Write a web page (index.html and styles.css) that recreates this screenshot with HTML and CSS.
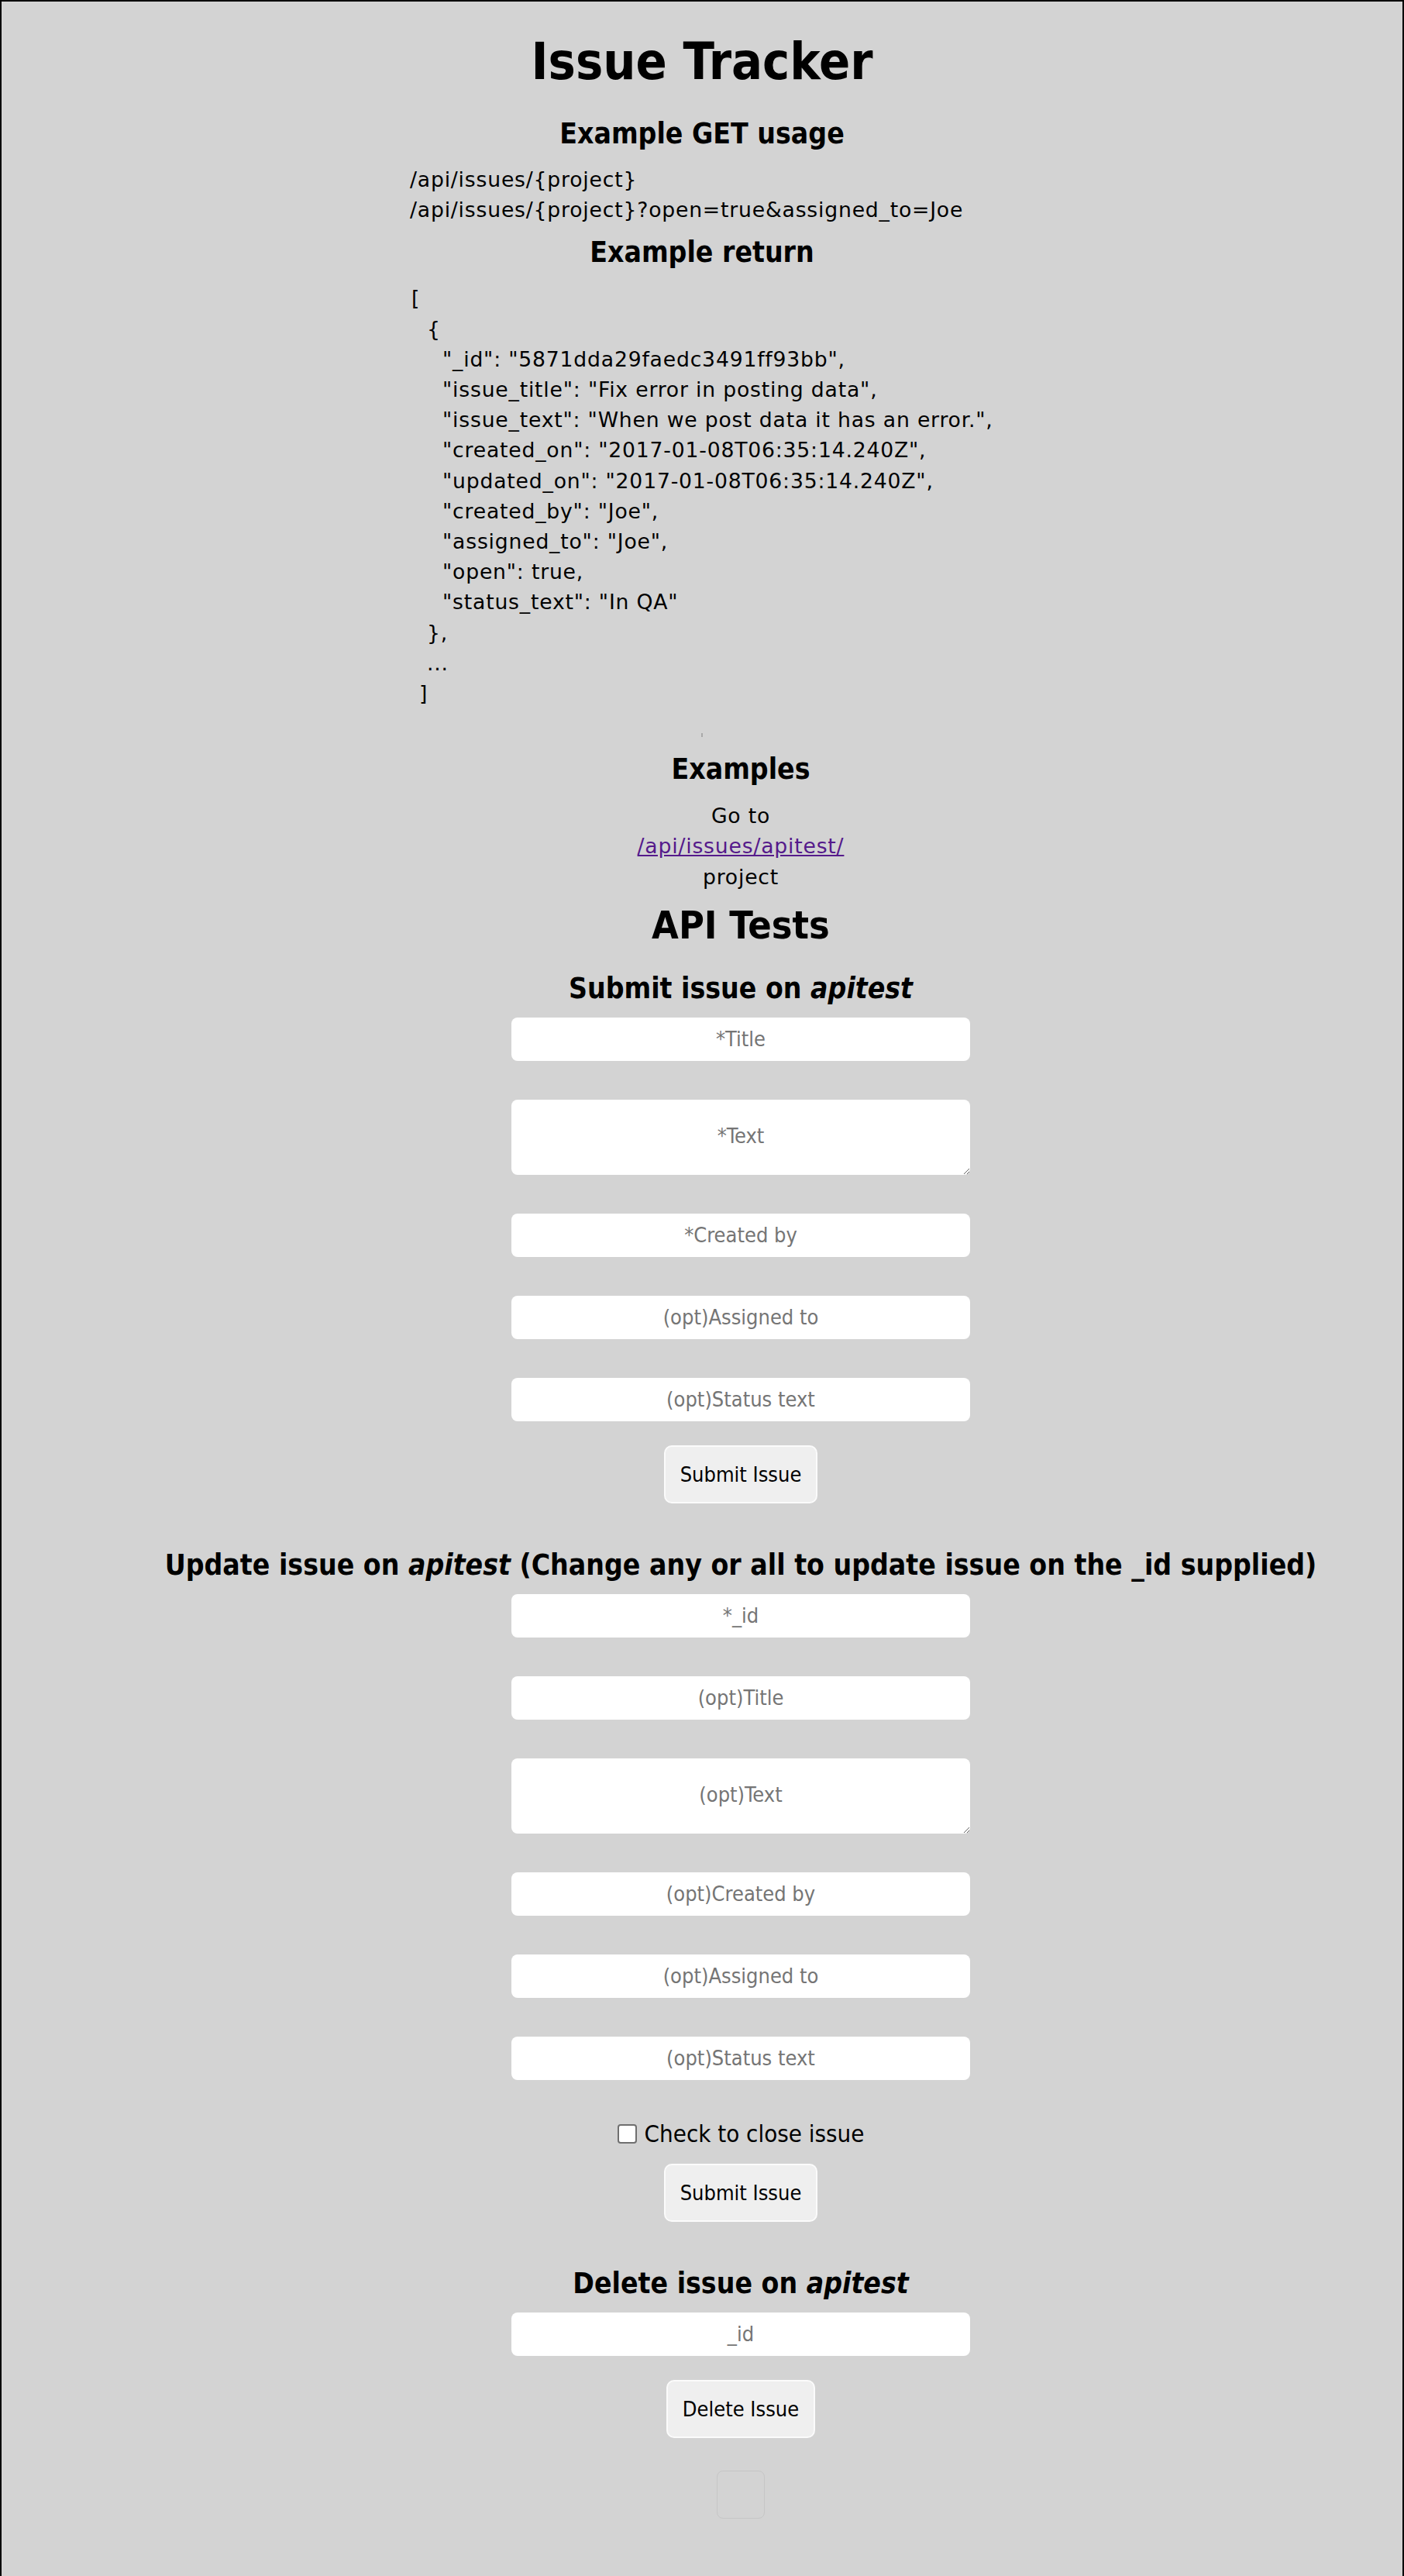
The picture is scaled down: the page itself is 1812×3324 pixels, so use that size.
FILE: index.html
```html
<!DOCTYPE html>
<html lang="en">
<head>
<meta charset="utf-8">
<title>Issue Tracker</title>
<link rel="stylesheet" href="styles.css">
</head>
<body>
<header class="intro">
  <h1 class="title">Issue Tracker</h1>
  <div class="usage">
    <h3 class="usage-head">Example GET usage</h3>
    <div class="api">/api/issues/{project}<br>/api/issues/{project}?open=true&amp;assigned_to=Joe</div>
    <h3 class="usage-head usage-head-return">Example return</h3>
    <div class="json">
      <div class="l0">[</div>
      <div class="l1">{</div>
      <div class="l2">"_id": "5871dda29faedc3491ff93bb",</div>
      <div class="l2">"issue_title": "Fix error in posting data",</div>
      <div class="l2">"issue_text": "When we post data it has an error.",</div>
      <div class="l2">"created_on": "2017-01-08T06:35:14.240Z",</div>
      <div class="l2">"updated_on": "2017-01-08T06:35:14.240Z",</div>
      <div class="l2">"created_by": "Joe",</div>
      <div class="l2">"assigned_to": "Joe",</div>
      <div class="l2">"open": true,</div>
      <div class="l2">"status_text": "In QA"</div>
      <div class="l1">},</div>
      <div class="l1">...</div>
      <div class="lend">]</div>
    </div>
  </div>
  <span class="mark"></span>
</header>
<main class="tests">
  <h3 class="section-head examples-head">Examples</h3>
  <p class="examples-text">Go to<br><a class="example-link" href="#">/api/issues/apitest/</a><br>project</p>
  <h2 class="tests-head">API Tests</h2>

  <h3 class="section-head form-head">Submit issue on <em>apitest</em></h3>
  <form class="issue-form">
    <div class="fields">
      <input class="field" type="text" placeholder="*Title">
      <textarea class="field field-area" placeholder="*Text"></textarea>
      <input class="field" type="text" placeholder="*Created by">
      <input class="field" type="text" placeholder="(opt)Assigned to">
      <input class="field" type="text" placeholder="(opt)Status text">
    </div>
    <button class="btn btn-first" type="button">Submit Issue</button>
  </form>

  <h3 class="section-head form-head form-head-update">Update issue on <em>apitest</em> (Change any or all to update issue on the _id supplied)</h3>
  <form class="issue-form">
    <div class="fields">
      <input class="field" type="text" placeholder="*_id">
      <input class="field" type="text" placeholder="(opt)Title">
      <textarea class="field field-area" placeholder="(opt)Text"></textarea>
      <input class="field" type="text" placeholder="(opt)Created by">
      <input class="field" type="text" placeholder="(opt)Assigned to">
      <input class="field" type="text" placeholder="(opt)Status text">
    </div>
    <label class="check-row"><input class="check" type="checkbox"> Check to close issue</label>
    <button class="btn btn-after-check" type="button">Submit Issue</button>
  </form>

  <h3 class="section-head form-head form-head-delete">Delete issue on <em>apitest</em></h3>
  <form class="issue-form">
    <div class="fields">
      <input class="field" type="text" placeholder="_id">
    </div>
    <button class="btn btn-first" type="button">Delete Issue</button>
  </form>

  <div class="result"></div>
</main>
</body>
</html>
```
FILE: styles.css
```css
html {
  background: #d3d3d3;
}

body {
  margin: 0;
  min-height: 100vh;
  box-sizing: border-box;
  border: 2px solid #000;
  border-bottom: 0;
  background: #d3d3d3;
  color: #000;
  font-family: Tahoma, "DejaVu Sans Condensed", "DejaVu Sans", sans-serif;
  font-stretch: condensed;
  font-size: 26.67px;
  line-height: 39.2px;
  text-align: center;
}

/* body copy set in the wider Verdana-like face */
.api,
.json,
.examples-text {
  font-family: Verdana, "DejaVu Sans", sans-serif;
  font-stretch: normal;
  font-size: 26.67px;
  letter-spacing: 0.8px;
}

/* ---------- intro ---------- */
.intro {
  display: flex;
  flex-direction: column;
  align-items: center;
}

.title {
  margin: 38px 0 0;
  font-size: 66px;
  line-height: 80px;
  font-weight: bold;
}

.usage {
  width: 754px;
  text-align: left;
}

.usage-head {
  margin: 33px 0 0;
  font-size: 37px;
  line-height: 40px;
  font-weight: bold;
  text-align: center;
}

.usage-head-return {
  margin-top: 16px;
}

.api {
  margin-top: 19px;
}

.json {
  margin-top: 19px;
  padding-left: 2px;
}

.l1 { padding-left: 20px; }
.l2 { padding-left: 40px; }
.lend { padding-left: 10px; }

.mark {
  display: block;
  width: 2px;
  height: 5px;
  margin-top: 32px;
  background: #a9a9a9;
}

/* ---------- tests ---------- */
.tests {
  display: flex;
  flex-direction: column;
  align-items: center;
  padding-left: 100px;
}

.section-head {
  margin: 0;
  font-size: 37px;
  line-height: 40px;
  font-weight: bold;
}

.examples-head {
  margin-top: 22px;
}

.examples-text {
  margin: 20px 0 0;
}

.example-link {
  color: #551a8b;
  text-decoration: underline;
}

.tests-head {
  margin: 15px 0 0;
  font-size: 50px;
  line-height: 56px;
  font-weight: bold;
}

.form-head {
  margin-top: 34px;
}

.form-head-update {
  margin-top: 60px;
}

.form-head-delete {
  margin-top: 60px;
}

.issue-form {
  display: flex;
  flex-direction: column;
  align-items: center;
  margin-top: 17px;
}

.fields {
  display: flex;
  flex-direction: column;
  align-items: center;
  gap: 50px;
}

.field {
  display: block;
  width: 592px;
  height: 56px;
  box-sizing: border-box;
  margin: 0;
  padding: 0 10px;
  border: 0;
  border-radius: 8px;
  background: #fff;
  font-family: inherit;
  font-stretch: condensed;
  font-size: 27px;
  line-height: 40px;
  color: #000;
  text-align: center;
  outline: none;
}

.field::placeholder {
  color: #757575;
}

.field-area {
  height: 97px;
  padding-top: 27px;
  resize: both;
}

.btn {
  height: 75px;
  box-sizing: border-box;
  padding: 0 19px;
  border: 2px solid #fbfbfb;
  border-radius: 10px;
  background: #efefef;
  color: #000;
  font-family: inherit;
  font-stretch: condensed;
  font-size: 27px;
}

.btn-first {
  margin-top: 31px;
}

.check-row {
  display: flex;
  align-items: center;
  gap: 10px;
  margin-top: 50px;
  height: 40px;
  font-size: 31px;
}

.check {
  appearance: none;
  width: 25px;
  height: 25px;
  margin: 0;
  box-sizing: border-box;
  border: 2px solid #6f6f6f;
  border-radius: 4px;
  background: #fff;
}

.btn-after-check {
  margin-top: 18px;
}

.result {
  width: 62px;
  height: 62px;
  box-sizing: border-box;
  margin-top: 42px;
  border: 1px solid #c6c6c6;
  border-radius: 8px;
}
```
